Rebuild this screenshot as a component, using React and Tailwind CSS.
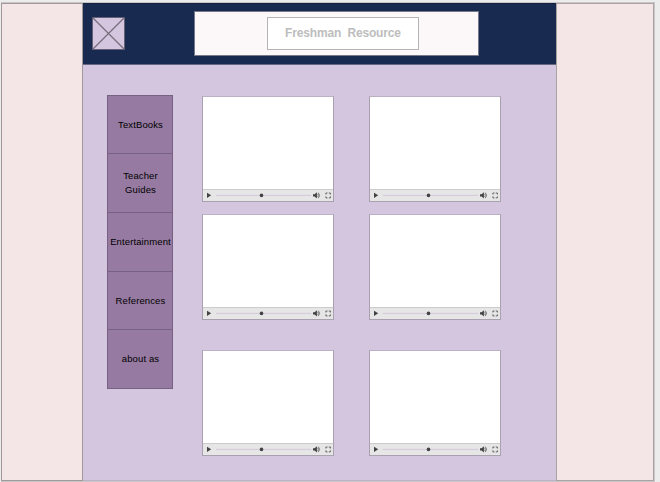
const links = [
  { label: "TextBooks", size: "h-[59px]" },
  { label: "Teacher Guides", size: "h-[60px]" },
  { label: "Entertainment", size: "h-[60px]" },
  { label: "References", size: "h-[59px]" },
  { label: "about as", size: "h-[60px]" },
];

function VideoPlayer() {
  return (
    <div className="flex h-[106px] w-[132px] flex-col border border-[#aaa1b0] border-t-[#bcb1c4] bg-white">
      <div className="grow" />
      <div className="h-3 border-t border-[#cccccc] bg-[#e6e6e6]">
        <svg className="block" width="130" height="11" viewBox="0 0 130 11">
          <path d="M4 2.7v5.2l4.2-2.6z" fill="#424242" />
          <path d="M13 5.4h95" stroke="#d4c6de" strokeWidth="1" />
          <circle cx="58.5" cy="5.4" r="1.8" fill="#424242" />
          <path d="M110 4.2h1.6l2.3-2v6.4l-2.3-2h-1.6z" fill="#424242" />
          <path d="M114.7 3.9q1.2 1.5 0 3M115.3 2.7q2.6 2.7 0 5.4" fill="none" stroke="#555" strokeWidth="0.8" />
          <path d="M122.9 4.5V3h1.6M125.8 3h1.6v1.5M127.4 6.4v1.5h-1.6M124.5 7.9h-1.6V6.4" fill="none" stroke="#555" strokeWidth="0.9" />
        </svg>
      </div>
    </div>
  );
}

function VideoRow() {
  return (
    <div className="flex gap-[35px]">
      <VideoPlayer />
      <VideoPlayer />
    </div>
  );
}

export default function App() {
  return (
    <div className="h-[482px] w-[660px] overflow-hidden bg-[#ececec] pt-[2px] pl-px font-['Liberation_Sans',Arial,sans-serif]">
      <div className="flex h-[480px] w-[654px] border-t border-r border-b border-[#c8c6c6]">
        <aside className="w-[82px] shrink-0 border border-[#a09899] bg-[#f4e6e6]" />
        <main className="flex w-[473px] shrink-0 flex-col border-b border-[#beb3c6] bg-[#d4c6de]">
          <header className="flex h-[62px] shrink-0 border-t border-b border-t-[#14213f] border-b-[#686783] bg-[#192a50]">
            <svg className="mt-[13px] ml-[9px] shrink-0" width="33" height="33" viewBox="0 0 33 33">
              <rect x="0.5" y="0.5" width="32" height="32" rx="0.5" fill="#d4c6de" stroke="#655f78" />
              <path d="M1 1l31 31M32 1L1 32" stroke="#756d7c" strokeWidth="1.2" />
            </svg>
            <div className="mt-[7px] ml-[69px] flex h-[45px] w-[285px] border border-[#77788a] bg-[#fcf8f9] pt-[5px] pl-[72px]">
              <h1 className="h-[33px] w-[152px] border border-[#b5b3b3] bg-white pt-[7px] pl-[17px] text-[12px] leading-4 font-bold tracking-[-0.16px] whitespace-pre text-[#bdbdbd]">
                Freshman  Resource
              </h1>
            </div>
          </header>
          <div className="flex">
            <nav className="mt-[30px] ml-6 h-[294px] w-[66px]">
              {links.map(({ label, size }) => (
                <a
                  key={label}
                  className={`-mb-px flex items-center justify-center border border-[#776182] bg-[#967aa1] pl-px text-center text-[9.5px] leading-[14px] tracking-[0.12px] text-black ${size}`}
                >
                  {label}
                </a>
              ))}
            </nav>
            <section className="mt-[31px] ml-[29px]">
              <VideoRow />
              <div className="mt-3">
                <VideoRow />
              </div>
              <div className="mt-[30px]">
                <VideoRow />
              </div>
            </section>
          </div>
        </main>
        <aside className="w-[98px] shrink-0 border border-[#aaa2a3] bg-[#f4e6e6]" />
      </div>
    </div>
  );
}
